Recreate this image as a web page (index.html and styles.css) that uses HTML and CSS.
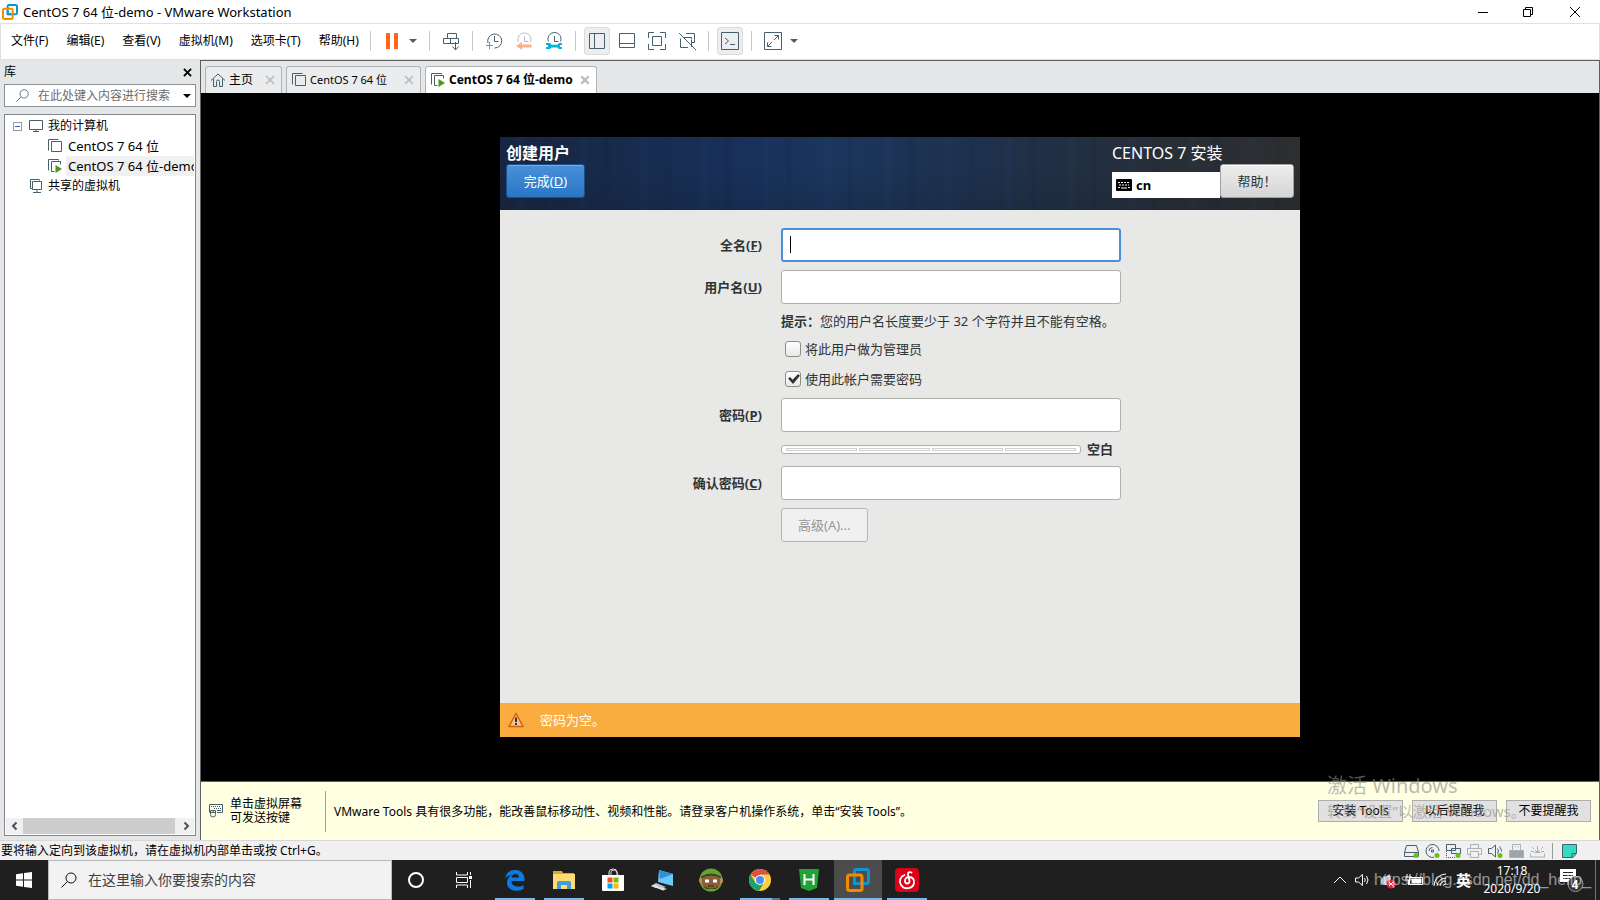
FILE: index.html
```html
<!DOCTYPE html>
<html lang="zh-CN">
<head>
<meta charset="utf-8">
<title>CentOS 7 64 位-demo - VMware Workstation</title>
<link rel="stylesheet" href="styles.css">
</head>
<body>
<svg class="defs" aria-hidden="true">
  <symbol id="vmpage" viewBox="0 0 16 16"><path d="M1.500 12.500v-11h10M4.500 3.500h10v10h-10z"/></symbol>
  <symbol id="vmrun" viewBox="0 0 16 16"><path d="M1.500 12.500v-11h10v1M4.500 13.500v-10h9v3M4.500 13.500h3"/><path d="M8.500 7l6.500 4-6.500 4z" fill="#4c9a11" stroke="none"/></symbol>
  <symbol id="lens" viewBox="0 0 18 18"><circle cx="11" cy="7" r="5"/><path d="M7.300 10.700L1.500 16.500"/></symbol>
  <symbol id="vmware" viewBox="0 0 24 24"><rect x="8.500" y="1.500" width="14" height="14" rx="2" stroke="#0b95d3"/><rect x="1.500" y="7" width="14.500" height="15.500" rx="2" stroke="#f38b00"/><path d="M8.500 10v5.500h5" stroke="#0b95d3"/></symbol>
</svg>

<header class="titlebar">
  <svg class="title-logo" viewBox="0 0 24 24"><use href="#vmware"/></svg>
  <h1>CentOS 7 64 位-demo - VMware Workstation</h1>
  <div class="window-buttons">
    <button aria-label="最小化"><svg viewBox="0 0 12 12"><path d="M1 6.500h10"/></svg></button>
    <button aria-label="还原"><svg viewBox="0 0 12 12"><path d="M1.500 3.500h7v7h-7zM3.500 3.500v-2h7v7h-2"/></svg></button>
    <button aria-label="关闭"><svg viewBox="0 0 12 12"><path d="M1 1l10 10M11 1L1 11"/></svg></button>
  </div>
</header>

<div class="toolbar">
  <nav class="menus">
    <button>文件(F)</button><button>编辑(E)</button><button>查看(V)</button><button>虚拟机(M)</button><button>选项卡(T)</button><button>帮助(H)</button>
  </nav>
  <i class="sep first"></i>
  <button class="tool" aria-label="挂起"><svg viewBox="0 0 26 26"><path d="M7 5h4v16H7zM15 5h4v16h-4z" fill="#ff681c" stroke="none"/></svg></button>
  <button class="drop" aria-label="电源选项"></button>
  <i class="sep"></i>
  <button class="tool" aria-label="发送 Ctrl+Alt+Del"><svg viewBox="0 0 26 26"><path d="M9.500 5.500h9v5h-9zM5.500 10.500h7v5h-7zM12.500 15.500v-5h8v5h-8M17.500 14v8M14.500 18.500l3 3.500 3-3.500"/></svg></button>
  <i class="sep"></i>
  <button class="tool" aria-label="拍摄快照"><svg viewBox="0 0 26 26"><path d="M7 15A7 7 0 1 1 13.500 20M13.500 8v5.500h4"/><path d="M5 17.500h7M8.500 14v7" stroke="#ff681c"/></svg></button>
  <button class="tool" aria-label="恢复快照"><svg viewBox="0 0 26 26"><path d="M7.500 14a6.500 6.500 0 1 1 12 0M13.500 8v5.500h4" stroke="#b4bcc2"/><path d="M5 18l6-4v2.500h9.500v3H11V22z" fill="#ffb08a" stroke="none"/></svg></button>
  <button class="tool" aria-label="管理快照"><svg viewBox="0 0 26 26"><path d="M7.500 13.500a6.500 6.500 0 1 1 12 0M13.500 8v5.500h4"/><path d="M5 15h4l1.500 1.800h6L18 15h3v2h-2v2h2v2h-3l-1.500-1.500h-6L9 21H5v-2h2v-2H5z" fill="#00b5d8" stroke="none"/></svg></button>
  <i class="sep"></i>
  <button class="tool pressed" aria-label="显示库"><svg viewBox="0 0 26 26"><path d="M5.500 5.500h15v15h-15zM10.500 5.500v15"/></svg></button>
  <button class="tool" aria-label="显示缩略图"><svg viewBox="0 0 26 26"><path d="M5.500 5.500h15v14h-15zM5.500 15.500h15"/></svg></button>
  <button class="tool" aria-label="全屏"><svg viewBox="0 0 26 26"><path d="M4.500 10V4.500H10M16 4.500h5.500V10M21.500 16v5.500H16M10 21.500H4.500V16M8.500 8.500h9v9h-9z"/></svg></button>
  <button class="tool" aria-label="Unity"><svg viewBox="0 0 26 26"><path d="M12 5.500h8.500v9H18M10 9.500h7.500v2M14 19.500H6.500v-9M17.500 12v7M5 5l17 17"/></svg></button>
  <i class="sep"></i>
  <button class="tool pressed" aria-label="控制台视图"><svg viewBox="0 0 26 26"><path d="M4.500 4.500h17v17h-17zM8 10l3.500 3L8 16M13 16.500h5"/></svg></button>
  <i class="sep"></i>
  <button class="tool" aria-label="拉伸"><svg viewBox="0 0 26 26"><path d="M4.500 4.500h17v17h-17zM14 12l4.500-4.500M14.500 7.500h4v4M12 14l-4.500 4.500M7.500 14.500v4h4"/></svg></button>
  <button class="drop" aria-label="拉伸选项"></button>
</div>

<main class="workspace">
  <aside class="library">
    <div class="library-head"><h2>库</h2><button aria-label="关闭库"><svg viewBox="0 0 10 10"><path d="M1 1l8 8M9 1L1 9"/></svg></button></div>
    <div class="library-search">
      <svg viewBox="0 0 18 18"><use href="#lens"/></svg>
      <input type="text" aria-label="搜索库" placeholder="在此处键入内容进行搜索">
      <button class="drop dark" aria-label="搜索选项"></button>
    </div>
    <div class="tree">
      <ul>
        <li class="root"><i class="minus"></i><svg viewBox="0 0 16 16"><path d="M1.500 2.500h13v9h-13zM5 13.500h6M8 11v2"/></svg><span>我的计算机</span></li>
        <li class="child"><svg viewBox="0 0 16 16"><use href="#vmpage"/></svg><span>CentOS 7 64 位</span></li>
        <li class="child current"><svg viewBox="0 0 16 16"><use href="#vmrun"/></svg><span>CentOS 7 64 位-demo</span></li>
        <li class="root shared"><svg viewBox="0 0 16 16"><path d="M4.500 10.500h-2v-9h9v1M4.500 3.500h9v8h-9zM9 12v2M5 14.500h8"/></svg><span>共享的虚拟机</span></li>
      </ul>
      <div class="hscroll"><svg viewBox="0 0 10 10"><path d="M6.500 1.500L3 5l3.500 3.500"/></svg><i></i><svg viewBox="0 0 10 10"><path d="M3.500 1.500L7 5 3.500 8.500"/></svg></div>
    </div>
  </aside>

  <section class="console">
    <div class="tabs">
      <div class="tab home"><svg viewBox="0 0 16 16"><path d="M1 8.500L8 2l7 6.500M3.500 7v7.500h3v-5a1.500 1.500 0 0 1 3 0v5h3V7"/></svg><a href="#home">主页</a><button aria-label="关闭">×</button></div>
      <div class="tab second"><svg viewBox="0 0 16 16"><use href="#vmpage"/></svg><a href="#centos">CentOS 7 64 位</a><button aria-label="关闭">×</button></div>
      <div class="tab active"><svg viewBox="0 0 16 16"><use href="#vmrun"/></svg><a href="#demo">CentOS 7 64 位-demo</a><button aria-label="关闭">×</button></div>
    </div>

    <div class="screen">
      <div class="installer">
        <div class="banner">
          <div class="banner-left"><h2>创建用户</h2><button class="gtk primary">完成(<u>D</u>)</button></div>
          <div class="banner-right">
            <p>CENTOS 7 安装</p>
            <div class="banner-row">
              <div class="keyboard"><svg viewBox="0 0 16 12"><rect width="16" height="12" rx="1" fill="#000"/><path d="M2 3.500h12M3 6h10M2 8.500h2M12 8.500h2" stroke="#fff" stroke-dasharray="2 1"/><path d="M5 9h6" stroke="#fff"/></svg>cn</div>
              <button class="gtk help">帮助！</button>
            </div>
          </div>
        </div>
        <form class="user-form">
          <label for="full">全名(<u>F</u>)</label>
          <div class="field focus"><input id="full" type="text"><i class="caret"></i></div>
          <label for="user">用户名(<u>U</u>)</label>
          <div class="field"><input id="user" type="text"></div>
          <div class="options">
            <p><b>提示：</b>您的用户名长度要少于 32 个字符并且不能有空格。</p>
            <label><input type="checkbox">将此用户做为管理员</label>
            <label><input type="checkbox" checked>使用此帐户需要密码</label>
          </div>
          <label for="pass">密码(<u>P</u>)</label>
          <div class="field"><input id="pass" type="password"></div>
          <div class="strength"><div class="meter"><i></i><i></i><i></i><i></i></div><b>空白</b></div>
          <label for="confirm">确认密码(<u>C</u>)</label>
          <div class="field"><input id="confirm" type="password"></div>
          <button class="gtk advanced" type="button" disabled>高级(A)...</button>
        </form>
        <div class="warning"><svg viewBox="0 0 16 16"><path d="M8 1.500L15 14.500H1z" fill="#f5c492" stroke="#d45d08" stroke-width="1.500" stroke-linejoin="round"/><path d="M8 5.500v4.500M8 11v2" stroke="#333" stroke-width="2"/></svg><span>密码为空。</span></div>
      </div>
    </div>

    <div class="notice">
      <svg viewBox="0 0 16 16"><path d="M1.500 9.500v-8h13v8H9M9 7.500h4"/><path d="M3 3.500h10M6 5.500h7" stroke-dasharray="1 1"/><path d="M2.500 7.500h5v4a2.500 2.500 0 0 1-5 0zM2.500 9.500h5M5 7v2" fill="#ffffe1"/></svg>
      <p class="click-hint">单击虚拟屏幕<br>可发送按键</p>
      <p class="tools-text">VMware Tools 具有很多功能，能改善鼠标移动性、视频和性能。请登录客户机操作系统，单击“安装 Tools”。</p>
      <button>安装 Tools</button><button>以后提醒我</button><button>不要提醒我</button>
    </div>
  </section>
</main>

<footer class="status">
  <span>要将输入定向到该虚拟机，请在虚拟机内部单击或按 Ctrl+G。</span>
  <div class="devices">
    <svg viewBox="0 0 17 16"><path d="M3.500 2.500h10l2 7v4h-14v-4zM1.500 9.500h14"/><circle cx="13" cy="12.500" r="2.500"/></svg>
    <svg viewBox="0 0 17 16"><path d="M15 8a6.500 6.500 0 1 0-5 6.300M5 8a3.500 3.500 0 0 1 3.500-3.500"/><path d="M7.500 7h2v2h-2z"/><circle cx="13" cy="12.500" r="2.500"/></svg>
    <svg viewBox="0 0 17 16"><path d="M1.500 1.500h9v6h-9zM6.500 5.500h9v5h-9z" fill="#f0f0f0"/><path d="M1.500 8v7M3 14.500h8" stroke-dasharray="1 1"/><circle cx="13" cy="12.500" r="2.500"/></svg>
    <svg class="off" viewBox="0 0 17 16"><path d="M4.500 5V1.500h8V5M4.500 11.500h-3v-6h14v6h-3M4.500 8.500h8v6h-8z"/></svg>
    <svg viewBox="0 0 17 16"><path d="M1.500 5.500h3l4-3.500v12l-4-3.500h-3zM10.500 5.500q2 2.500 0 5M12.500 3.500q2 2.500 2 5"/><circle cx="13" cy="12.500" r="2.500"/></svg>
    <svg class="off" viewBox="0 0 17 16"><path d="M1.500 7.500h14v7h-14z" fill="#9aa4ac"/><path d="M4.500 7.500v-6h8v6M7 4h1M10 4h1"/></svg>
    <svg class="off" viewBox="0 0 17 16"><path d="M1.500 10.500v3.500h14v-3.500M5.500 9.500h6M8.500 3v6M6 7l2.500 2.500L11 7M3 4l2 2M14 4l-2 2M2 8.500h3M12 8.500h3"/></svg>
    <i></i>
    <svg viewBox="0 0 17 16"><path d="M1.500 1.500h14v9l-3.500 4H1.500z" fill="#33dbc3"/><path d="M15 10.500h-4v4"/></svg>
  </div>
</footer>

<div class="taskbar">
  <button class="start" aria-label="开始"><svg viewBox="0 0 16 16"><path d="M0 2.300l7-1v6.200H0zM8 1.100L16 0v7.500H8zM0 8.500h7v6.200l-7-1zM8 8.500h8V16l-8-1.100z" fill="#fff"/></svg></button>
  <label class="task-search"><svg viewBox="0 0 18 18"><use href="#lens"/></svg><input type="text" aria-label="搜索" placeholder="在这里输入你要搜索的内容"></label>
  <div class="system-apps">
    <button aria-label="Cortana"><svg viewBox="0 0 24 24"><circle cx="12" cy="12" r="7" fill="none" stroke="#fff" stroke-width="2"/></svg></button>
    <button aria-label="任务视图"><svg viewBox="0 0 24 24"><path d="M4.500 4v3h11V4M4.500 20v-3h11v3M4.500 9.500h11v5h-11zM18.500 4v3M18.500 12v8" fill="none" stroke="#fff"/><path d="M17 8h3v3h-3z" fill="#fff"/></svg></button>
  </div>
  <div class="apps">
    <button class="open" aria-label="Edge"><svg viewBox="0 0 24 24"><path d="M2 11C3 4 8 1.500 13 2c6 .500 9 5 8.500 11H8.500c0 4 3 5.500 6.500 5.500 2.500 0 4-.5 5.500-1.500v4c-2 1.200-4 1.700-7 1.700C7 22.700 4 19 4 15c0-4 2-6.500 5-8-4 .500-6 2-7 4zm6.500-1.500H16C16 7.500 14.500 6 12.500 6S9 7.500 8.500 9.500z" fill="#0c7be0"/></svg></button>
    <button class="open" aria-label="文件资源管理器"><svg viewBox="0 0 24 24"><path d="M1 3h9l1 2h11v16H1z" fill="#e7a51d"/><path d="M1 6h22v15H1z" fill="#ffdb72"/><path d="M5 21v-6q0-2 2-2h10q2 0 2 2v6h-4v-4H9v4z" fill="#3f9de0"/></svg></button>
    <button aria-label="应用商店"><svg viewBox="0 0 24 24"><path d="M8 7V4q0-3 4-3t4 3v3M10 7V4q0-2 3-2t4 5" fill="none" stroke="#ddd"/><path d="M1 7h22v15q0 1-1 1H2q-1 0-1-1z" fill="#fff"/><path d="M6.500 9.500h5v5h-5z" fill="#f25022"/><path d="M12.500 9.500h5v5h-5z" fill="#7fba00"/><path d="M6.500 15.500h5v5h-5z" fill="#00a4ef"/><path d="M12.500 15.500h5v5h-5z" fill="#ffb900"/></svg></button>
    <button aria-label="此电脑"><svg viewBox="0 0 24 24"><path d="M9 2l14 4v12L8 14z" fill="#6cc9ff"/><path d="M9 2l14 4-13 5z" fill="#2a91dc"/><path d="M11 17l5 2-3 1-5-2zM6 15l5 2-5 3-5-2z" fill="#c7cbd0"/><path d="M1 18l3-1 13 4-4 1.500z" fill="#e2e5e8"/></svg></button>
    <button aria-label="游戏"><svg viewBox="0 0 24 24"><circle cx="12" cy="12" r="11.500" fill="#65a52b"/><circle cx="3" cy="12.500" r="3" fill="#c08a60"/><circle cx="21" cy="12.500" r="3" fill="#c08a60"/><path d="M3 9q9-5 18 0v6q-1 6-9 6t-9-6z" fill="#8d5c38"/><path d="M2 8.500Q12 2.500 22 8.500v1.500q-10-5-20 0zM4 18q8 5 16 0l-3 3H7z" fill="#34471f"/><path d="M6 11.500h4v3H6zM14 11.500h4v3h-4z" fill="#fff"/><path d="M8 11.500h2v3H8zM14 11.500h2v3h-2z"/><path d="M9 18h6" stroke="#3a2415"/></svg></button>
    <button class="open multi" aria-label="Chrome"><svg viewBox="0 0 24 24"><circle cx="12" cy="12" r="11" fill="#ffcd40"/><path d="M12 12L2.500 6.500A11 11 0 0 1 21.500 6.500H12z" fill="#dd5144"/><path d="M2.500 6.500A11 11 0 0 0 11 23l5-8.500-4-2.500-4.500 3z" fill="#1da462"/><circle cx="12" cy="12" r="5" fill="#fff"/><circle cx="12" cy="12" r="4" fill="#4c8bf5"/></svg></button>
    <button class="open" aria-label="HBuilder"><svg viewBox="0 0 24 24"><path d="M2 1h20l-2 19-8 3-8-3z" fill="#1fa336"/><path d="M7.500 6v11M16.500 6v11M7.500 11.500h9" fill="none" stroke="#fff" stroke-width="2"/></svg></button>
    <button class="open selected" aria-label="VMware"><svg class="vmware" viewBox="0 0 24 24"><use href="#vmware"/></svg></button>
    <button class="open" aria-label="网易云音乐"><svg viewBox="0 0 24 24"><rect width="24" height="24" rx="4" fill="#dc001b"/><path d="M16.500 4.500c-2-1-4 0-3.500 2l1.500 6.500c.5 3-4 3.500-4.500.5C9.500 10.500 12 9 14 9c4 0 5.500 3 5 6-1 6-10 7-13 2-2.500-4-.500-8.500 3.500-10" fill="none" stroke="#fff" stroke-width="1.800" stroke-linecap="round"/></svg></button>
  </div>
  <div class="tray">
    <svg viewBox="0 0 20 20"><path d="M4 13l6-6 6 6"/></svg>
    <svg viewBox="0 0 20 20"><path d="M3.500 8h3l4-3.500v11L6.500 12h-3zM12.500 8q1.500 2 0 4M14.500 6q3 4 0 8"/></svg>
  </div>
  <div class="tray tray-two">
    <svg viewBox="0 0 20 20"><path d="M3 11q1-5 5-4 3-5 5 1v7H6q-3 0-3-4" fill="#bbb" stroke="none"/><circle cx="13" cy="14" r="4.500" fill="#e3202c" stroke="none"/><path d="M11 12l4 4M15 12l-4 4"/></svg>
    <svg viewBox="0 0 20 20"><path d="M5.500 7.500h13v7h-13z"/><path d="M8 9h9v4H8z" fill="#fff"/><path d="M2 7h5v3H2zM3 4v3M6 4v3M4.500 10v5"/></svg>
    <svg viewBox="0 0 20 20"><path d="M4 16A12 12 0 0 1 16 4M7 16a9 9 0 0 1 9-8M10 16a6 6 0 0 1 6-5M13 16q0-2 3-2"/></svg>
    <span class="ime">英</span>
  </div>
  <div class="datetime"><time>17:18</time><time>2020/9/20</time></div>
  <button class="messages" aria-label="通知"><svg viewBox="0 0 24 24"><path d="M0 1h16v13h-4v4l-4-4H0z" fill="#fff"/><path d="M3 4.500h10M3 7.500h10M3 10.500h8" stroke="#222"/><circle cx="15.500" cy="16" r="7.500" fill="#333" stroke="#999"/></svg><b>4</b></button>
</div>

<div class="activation"><strong>激活 Windows</strong><span>转到“设置”以激活 Windows。</span></div>
<div class="blog-mark">https://blog.csdn.net/dd_hello_</div>
</body>
</html>
```

FILE: styles.css
```css
* { box-sizing: border-box; }
body {
  margin: 0;
  height: 100vh;
  display: flex;
  flex-direction: column;
  overflow: hidden;
  position: relative;
  background: #e4e6e7;
  color: #000;
  font: 12px/20px "Noto Sans", "Noto Sans CJK SC", sans-serif;
}
h1, h2, p, ul { margin: 0; padding: 0; font-size: inherit; font-weight: normal; }
ul { list-style: none; }
button, input { font: inherit; color: inherit; border: 0; padding: 0; background: none; }
input { min-width: 0; outline: 0; }
svg { flex: none; fill: none; stroke: #47606d; }
.defs { position: absolute; width: 0; height: 0; }

.titlebar { display: flex; align-items: center; height: 24px; background: #fff; border-bottom: 1px solid #e0e0e0; }
.title-logo { width: 16px; height: 16px; margin: 0 5px 0 2px; stroke-width: 3; }
.titlebar h1 { flex: 1; font-size: 13px; }
.window-buttons { display: flex; }
.window-buttons button { width: 45px; height: 22px; display: flex; align-items: center; justify-content: center; }
.window-buttons button:last-child { width: 50px; }
.window-buttons svg { width: 12px; height: 12px; stroke: #000; }

.toolbar { display: flex; align-items: center; height: 36px; padding-bottom: 2px; background: #fff; border: solid #e0e0e0; border-width: 0 1px 1px; }
.menus { display: flex; gap: 18px; padding-left: 10px; }
.menus button { white-space: nowrap; }
.sep { width: 1px; height: 20px; margin: 0 8px; background: #c4c8ca; }
.sep.first { margin-left: 11px; }
.tool { width: 26px; height: 28px; display: flex; align-items: center; justify-content: center; }
.tool + .tool { margin-left: 4px; }
.tool svg { width: 26px; height: 26px; }
.pressed { background: #eceeef; box-shadow: inset 0 0 0 1px #d9dcdd; border-radius: 4px; }
.drop { width: 16px; height: 20px; display: flex; align-items: center; justify-content: center; }
.drop::before { content: ""; border: 4px solid transparent; border-top-color: #47606d; border-bottom: 0; }
.dark::before { border-top-color: #000; }

.workspace { flex: 1; min-height: 0; display: flex; }
.library { width: 200px; display: flex; flex-direction: column; padding: 0 4px 4px; }
.library-head { display: flex; justify-content: space-between; align-items: center; height: 24px; }
.library-head button { width: 18px; height: 18px; display: grid; place-items: center; }
.library-head svg { width: 9px; height: 9px; stroke: #000; stroke-width: 2; }
.library-search { display: flex; align-items: center; height: 23px; background: #fff; border: 1px solid #8a9197; margin-bottom: 7px; }
.library-search svg { width: 15px; height: 15px; margin: 0 8px 0 10px; }
.library-search input { flex: 1; }
.library-search input::placeholder { color: #6b6b6b; opacity: 1; }
.tree { flex: 1; display: flex; flex-direction: column; justify-content: space-between; border: 1px solid #828790; background: #fff; padding: 1px; }
.tree li { display: flex; align-items: center; height: 20px; white-space: nowrap; overflow: hidden; }
.tree li svg { width: 16px; height: 16px; }
.root { padding-left: 7px; }
.root svg { margin: 0 4px 0 6px; }
.shared { padding-left: 16px; }
.child { padding-left: 41px; font-size: 13px; }
.child svg { margin-right: 3px; }
.child span { padding-left: 2px; }
.current span { background: #f0f0f0; }
.minus { width: 9px; height: 9px; border: 1px solid #999; display: grid; place-items: center; }
.minus::before { content: ""; width: 5px; height: 1px; background: #3c5da8; }
.hscroll { height: 16px; display: flex; align-items: center; background: #f0f0f0; }
.hscroll svg { width: 10px; height: 10px; margin: 0 3px 0 4px; stroke: #505050; stroke-width: 2; }
.hscroll i { flex: 1; height: 16px; background: #cdcdcd; margin-right: 2px; }

.console { flex: 1; min-width: 0; display: flex; flex-direction: column; border: 1px solid #606060; border-bottom: 0; }
.tabs { display: flex; align-items: flex-end; gap: 4px; height: 32px; padding-left: 4px; }
.tab { display: flex; align-items: center; height: 27px; padding: 0 4px; border: 1px solid #b0b4b6; border-bottom: 0; border-radius: 3px 3px 0 0; background: #ebeced; }
.tab svg { width: 16px; height: 16px; margin-right: 3px; }
.tab a { flex: 1; color: #000; text-decoration: none; white-space: nowrap; font-size: 12px; }
.tab button { width: 14px; font-size: 20px; line-height: 18px; color: #b8babb; }
.home { width: 77px; }
.second { width: 135px; }
.tab.second a { font-size: 11px; }
.tab.active { width: 172px; background: #fff; font-weight: bold; }

.screen { flex: 1; min-height: 0; display: flex; justify-content: center; align-items: center; background: #000; border-bottom: 1px solid #606060; }
.installer { width: 800px; height: 600px; display: flex; flex-direction: column; background: #e8e8e6; color: #2e3436; font-size: 13px; }
.banner {
  height: 73px;
  display: flex;
  justify-content: space-between;
  padding: 5px 6px;
  color: #fff;
  background:
    repeating-linear-gradient(90deg, transparent 0 17px, #2a5a9a0e 19px 24px, transparent 27px 41px, #0a153016 43px 47px, transparent 50px 61px),
    linear-gradient(#00000000 40%, #10182233),
    linear-gradient(90deg, #172640, #18305a 30%, #1b355c 42%, #1f3048 65%, #292e36 85%, #2d2e30);
}
.banner h2 { font-size: 16px; line-height: 22px; font-weight: bold; }
.gtk { height: 34px; border: 1px solid #a1a1a1; border-radius: 3px; background: linear-gradient(#ededed, #d5d5d5); color: #2e3436; padding: 0 16px; box-shadow: inset 0 1px #fff; white-space: nowrap; }
.primary { width: 79px; border-color: #1c5187; color: #fff; background: linear-gradient(#4a90d9, #2a76c6); box-shadow: inset 0 1px #75aee6; }
.help { width: 74px; }
.banner-right p { font-size: 16px; line-height: 22px; }
.banner-row { display: flex; align-items: flex-end; }
.keyboard { width: 108px; height: 26px; display: flex; align-items: center; gap: 4px; padding-left: 4px; background: #fff; color: #000; font-weight: bold; }
.keyboard svg { width: 16px; height: 12px; stroke: none; }
.user-form { flex: 1; display: grid; grid-template-columns: 262px 340px; column-gap: 19px; row-gap: 8px; align-content: start; align-items: center; padding-top: 18px; }
.user-form > label { font-weight: bold; text-align: right; }
.field { display: flex; position: relative; }
.field input { flex: 1; height: 34px; border: 1px solid #aeb0aa; border-radius: 3px; background: #fff; padding: 0 8px; }
.focus input { border: 2px solid #4a90d9; }
.caret { position: absolute; left: 9px; top: 8px; width: 1px; height: 17px; background: #000; }
.options, .strength, .advanced { grid-column: 2; }
.options { margin-bottom: -4px; }
.options p { line-height: 20px; margin: -1px 0 3px; white-space: nowrap; }
.options label { display: flex; align-items: center; gap: 4px; height: 30px; padding-left: 4px; }
.options input { appearance: none; width: 16px; height: 16px; margin: 0; border: 1px solid #8c8e89; border-radius: 3px; background: linear-gradient(#fff, #e8e8e8); }
.options input:checked::before { content: ""; display: block; width: 12px; height: 10px; margin: 2px 0 0 2px; background: #2e3436; clip-path: polygon(0 45%, 18% 30%, 38% 58%, 84% 0, 100% 18%, 42% 100%); }
.strength { display: flex; align-items: center; gap: 6px; height: 18px; }
.meter { width: 300px; height: 9px; display: flex; align-items: center; gap: 2px; border: 1px solid #aeb0aa; border-radius: 3px; background: #fff; padding: 0 4px; }
.meter i { flex: 1; height: 3px; border: 1px solid #ccd0d0; }
.advanced { justify-self: start; background: #f0f0f0; color: #959796; border-color: #b5b7b3; box-shadow: none; }
.warning { height: 34px; display: flex; align-items: center; gap: 16px; padding-left: 8px; background: #fbac3e; color: #fff; }
.warning svg { width: 16px; height: 16px; }

.notice { height: 58px; display: flex; align-items: center; background: #ffffe1; padding-right: 8px; }
.notice svg { width: 16px; height: 16px; margin: 0 6px 0 7px; }
.click-hint { width: 95px; line-height: 14px; }
.tools-text { flex: 1; border-left: 1px solid #a0a0a0; padding-left: 8px; line-height: 41px; white-space: nowrap; }
.notice button { width: 85px; height: 22px; margin-left: 9px; border: 1px solid #adadad; background: #e1e1e1; line-height: 18px; }

.status { height: 20px; display: flex; justify-content: space-between; align-items: center; background: #f0f0f0; border-top: 1px solid #d7d7d7; padding: 1px 22px 0 1px; }
.devices { display: flex; align-items: center; gap: 4px; }
.devices svg { width: 17px; height: 16px; }
.devices circle { fill: #6cc015; stroke: none; }
.devices .off { stroke: #a9b1b7; }
.devices i { width: 1px; height: 16px; background: #999; margin: 0 4px 0 2px; }

.taskbar { height: 40px; display: flex; background: #1f1f1f; color: #fff; }
.taskbar button { width: 48px; height: 40px; display: flex; align-items: center; justify-content: center; }
.start svg { width: 16px; height: 16px; stroke: none; }
.task-search { width: 344px; display: flex; align-items: center; gap: 10px; padding-left: 11px; background: #f2f2f2; border: 1px solid #b8b8b8; }
.task-search svg { width: 18px; height: 18px; stroke: #111; }
.task-search input { flex: 1; font-size: 14px; }
.task-search input::placeholder { color: #404040; opacity: 1; }
.system-apps { display: flex; width: 99px; }
.system-apps svg, .apps svg { width: 24px; height: 24px; stroke: none; }
.apps { display: flex; gap: 1px; }
.apps button { position: relative; }
.apps .vmware { stroke-width: 3; }
.open::after { content: ""; position: absolute; left: 4px; right: 4px; bottom: 0; height: 2px; background: #76b9ed; }
.apps .selected { background: #4c4c4c; }
.selected::after { left: 0; right: 0; }
.multi::after { background: linear-gradient(90deg, #76b9ed 80%, #4e7ba0 80%); }
.tray { display: flex; align-items: center; margin-left: auto; gap: 2px; }
.tray svg { width: 20px; height: 20px; stroke: #fff; }
.tray-two { margin-left: 6px; gap: 6px; }
.ime { font-size: 15px; font-weight: bold; }
.datetime { width: 72px; display: flex; flex-direction: column; align-items: center; line-height: 18px; padding: 2px 0; margin-left: 5px; }
.taskbar .messages { position: relative; width: 48px; border-right: 1px solid #777; margin-right: 4px; }
.messages svg { width: 24px; height: 24px; stroke: none; }
.messages b { position: absolute; left: 22px; top: 15px; width: 10px; line-height: 20px; font-size: 12px; }

.activation, .blog-mark { position: absolute; pointer-events: none; white-space: nowrap; }
.activation { left: 1327px; top: 771px; color: #8c8c8c99; }
.activation strong, .activation span { display: block; font-weight: normal; }
.activation strong { font-size: 20px; line-height: 30px; }
.activation span { font-size: 15px; line-height: 20px; }
.blog-mark { left: 1374px; top: 870px; font-family: "Liberation Sans", sans-serif; font-size: 16px; color: #ffffff88; }
```
